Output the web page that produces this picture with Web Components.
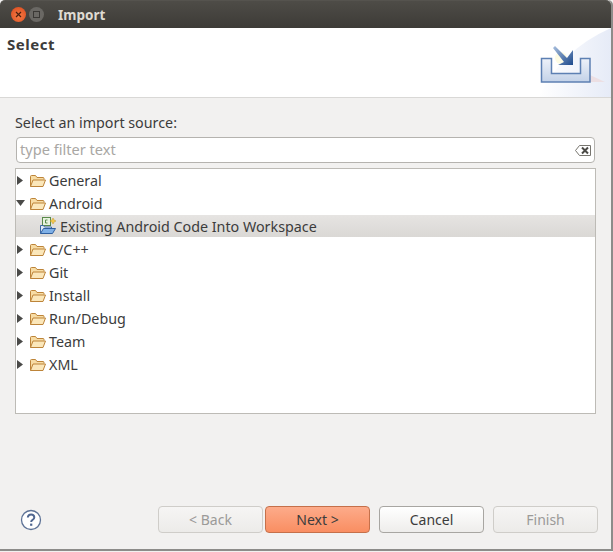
<!DOCTYPE html>
<html>
<head>
<meta charset="utf-8">
<title>Import</title>
<style>
html, body { margin: 0; padding: 0; background: #f2f1f0; }
body { width: 613px; height: 552px; overflow: hidden; font-family: "Noto Sans", "Open Sans", sans-serif; }
</style>
</head>
<body>
<import-dialog></import-dialog>

<script>
const FOLDER = `<svg width="18" height="14" viewBox="0 0 18 14">
  <path d="M1.500 12.500V2.500q0-1 1-1h4l1.500 2h6q1 0 1 1v1" fill="#f7dca4" stroke="#bd8439"/>
  <path d="M1.500 12.500l2.500-6.500h12.500l-2.500 6.500z" fill="#fbe7ba" stroke="#bd8439" stroke-linejoin="round"/>
</svg>`;

// Class structure for the title bar
class TitleBar extends HTMLElement {
    constructor() {
        super();
        const shadow = this.attachShadow({ mode: "open" });
        shadow.innerHTML = `
            <style>
                :host {
                    display: flex;
                    align-items: center;
                    height: 28px;
                    padding-left: 11px;
                    background: linear-gradient(#4e4c47, #3d3b37);
                    border-top: 1px solid #55534e;
                    border-radius: 5px 5px 0 0;
                    box-sizing: border-box;
                    color: #dfdbd2;
                    font: bold 13.500px "Noto Sans", sans-serif;
                }
                .close, .max {
                    width: 15px;
                    height: 15px;
                    border-radius: 50%;
                    display: flex;
                    align-items: center;
                    justify-content: center;
                }
                .close { background: radial-gradient(circle at 50% 60%, #f47b45, #d9481c); }
                .max { background: #6a6864; margin-left: 3px; }
                .title { margin-left: 14px; }
            </style>
            <span class="close"><svg width="7" height="7" viewBox="0 0 7 7"><path d="M1 1l5 5M6 1l-5 5" stroke="#4a2010" stroke-width="1.200"/></svg></span>
            <span class="max"><svg width="7" height="7" viewBox="0 0 7 7"><rect x=".5" y=".5" width="6" height="6" fill="none" stroke="#3a3835"/></svg></span>
            <span class="title"><slot></slot></span>
        `;
    }
}
customElements.define("title-bar", TitleBar);

// Class structure for the white banner on top
class WizardBanner extends HTMLElement {
    constructor() {
        super();
        const shadow = this.attachShadow({ mode: "open" });
        shadow.innerHTML = `
            <style>
                :host {
                    display: flex;
                    justify-content: space-between;
                    height: 70px;
                    box-sizing: border-box;
                    background: #fff;
                    border-bottom: 1px solid #d9d8d6;
                    color: #3c3c3c;
                    font: bold 15px "Noto Sans", sans-serif;
                    letter-spacing: .5px;
                }
                .text { padding: 6px 0 0 7px; }
                svg { display: block; }
            </style>
            <div class="text"><slot></slot></div>
            <svg width="112" height="69" viewBox="0 0 112 69">
                <defs>
                    <linearGradient id="sky" x1="0" y1="0" x2="1" y2="0">
                        <stop offset="0" stop-color="#fff"/><stop offset="1" stop-color="#e6ebf7"/>
                    </linearGradient>
                    <linearGradient id="tray" x1="0" y1="0" x2="0" y2="1">
                        <stop offset="0" stop-color="#eef2f9"/><stop offset="1" stop-color="#c3d2e8"/>
                    </linearGradient>
                    <linearGradient id="arrow" x1="0" y1="0" x2="1" y2="1">
                        <stop offset="0" stop-color="#a9bfde"/><stop offset="1" stop-color="#1d4a8c"/>
                    </linearGradient>
                </defs>
                <path d="M40 69Q62 22 112 0V69z" fill="url(#sky)"/>
                <path d="M91 54V47L106 54z" fill="#ecdfe3"/>
                <circle cx="62" cy="30" r="6" fill="#fdfbe4"/>
                <path d="M42.500 30.500h10v15h29v-15h9.500v23.500h-48.500z" fill="url(#tray)" stroke="#5d80b3" stroke-width="1.500"/>
                <path d="M54 20l2-2 12 12 6-8v15H59l6-3z" fill="url(#arrow)"/>
            </svg>
        `;
    }
}
customElements.define("wizard-banner", WizardBanner);

// Filter box with the clear icon
class FilterBox extends HTMLElement {
    constructor() {
        super();
        const shadow = this.attachShadow({ mode: "open" });
        shadow.innerHTML = `
            <style>
                :host {
                    display: flex;
                    align-items: center;
                    justify-content: space-between;
                    height: 26px;
                    margin: 0 1px;
                    padding: 0 3px 0 3px;
                    box-sizing: border-box;
                    background: #fff;
                    border: 1px solid #b5b3af;
                    border-radius: 4px;
                    color: #a9a7a4;
                    font: 14.600px "Noto Sans", sans-serif;
                }
                span { padding-bottom: 2px; }
                svg { display: block; }
            </style>
            <span><slot></slot></span>
            <svg width="16" height="11" viewBox="0 0 16 11">
                <path d="M4.500.500h11v10h-11L.5 5.500z" fill="#fff" stroke="#77756f"/>
                <path d="M7 2.500l6 6M13 2.500l-6 6" stroke="#4b4a46" stroke-width="2"/>
            </svg>
        `;
    }
}
customElements.define("filter-box", FilterBox);

// One row of the tree, attributes: arrow = closed | open | none, selected
class TreeRow extends HTMLElement {
    static observedAttributes = ["arrow", "selected", "icon"];
    constructor() {
        super();
        this.attachShadow({ mode: "open" });
    }

    connectedCallback() {
        const arrow = this.getAttribute("arrow") || "closed";
        const child = arrow === "none";
        let arrowSvg = `<path d="M1 1l6 4.500-6 4.500z" fill="#4a4a48"/>`;
        if (arrow === "open") arrowSvg = `<path d="M0 2h9l-4.500 6z" fill="#4a4a48"/>`;
        const icon = child ? `<svg width="18" height="18" viewBox="0 0 18 18">
                <rect x="3.500" y=".5" width="8" height="8" fill="#e8f3df" stroke="#5a8a4a"/>
                <path d="M8.500 3H6.500v3h2" fill="none" stroke="#5a8a4a"/>
                <path d="M14 1l1 2 2 1-2 1-1 2-1-2-2-1 2-1z" fill="#f5c84a" stroke="#c79a2a" stroke-width=".5"/>
                <path d="M1.500 16.500V8.500h3l1 1.500h7v2" fill="#dfe9f5" stroke="#3d6aa5"/>
                <path d="M1.500 16.500l3-5h12l-3 5z" fill="#7fb0e6" stroke="#2f5f9f" stroke-linejoin="round"/>
            </svg>` : FOLDER;
        this.shadowRoot.innerHTML = `
            <style>
                :host {
                    display: flex;
                    align-items: center;
                    height: ${child ? 22 : 23}px;
                    ${child ? "margin-bottom: 1px;" : ""}
                    padding-left: ${child ? 23 : 0}px;
                    color: #3c3c3c;
                    font: 14.300px "Noto Sans", sans-serif;
                    white-space: nowrap;
                }
                :host([selected]) {
                    background: linear-gradient(#e6e4e2, #dad8d5);
                }
                .arrow { width: 13px; display: flex; }
                .label { margin-left: ${child ? 2 : 1}px; }
                svg { display: block; flex: none; }
                .icon { width: 19px; display: flex; }
            </style>
            ${child ? "" : `<span class="arrow"><svg width="9" height="11" viewBox="0 0 9 11">${arrowSvg}</svg></span>`}
            <span class="icon">${icon}</span>
            <span class="label"><slot></slot></span>
        `;
    }
}
customElements.define("tree-row", TreeRow);

// Footer button, variants: default, primary, disabled
class WizardButton extends HTMLElement {
    constructor() {
        super();
        const shadow = this.attachShadow({ mode: "open" });
        shadow.innerHTML = `
            <style>
                :host {
                    display: flex;
                    align-items: center;
                    justify-content: center;
                    width: 105px;
                    height: 27px;
                    box-sizing: border-box;
                    border: 1px solid #a8a6a2;
                    border-radius: 4px;
                    background: linear-gradient(#fff, #eeedeb);
                    color: #3c3c3c;
                    font: 14px "Noto Sans", sans-serif;
                }
                :host([primary]) {
                    border-color: #c5704a;
                    background: linear-gradient(#fdab8a, #f98e62);
                }
                :host([disabled]) {
                    border-color: #cfcdc9;
                    background: linear-gradient(#f6f5f4, #ecebe9);
                    color: #9b9a98;
                }
            </style>
            <slot></slot>
        `;
    }
}
customElements.define("wizard-button", WizardButton);

// The whole dialog
class ImportDialog extends HTMLElement {
    constructor() {
        super();
        const shadow = this.attachShadow({ mode: "open" });
        shadow.innerHTML = `
            <style>
                :host {
                    display: block;
                    width: 613px;
                    height: 552px;
                    box-sizing: border-box;
                    padding: 0 0 1px 0;
                    background: #f2f1f0;
                }
                .window {
                    display: flex;
                    flex-direction: column;
                    width: 613px;
                    height: 551px;
                    box-sizing: border-box;
                    background: #f2f1f0;
                    border-right: 2px solid #8d8c8a;
                    border-bottom: 2px solid #8d8c8a;
                    border-radius: 5px 5px 0 0;
                }
                .body { flex: 1; display: flex; flex-direction: column; padding: 0 15px; }
                .caption { height: 39px; box-sizing: border-box; padding-top: 15px; color: #3c3c3c; font: 14.300px/20px "Noto Sans", sans-serif; }
                .tree {
                    height: 246px;
                    margin-top: 5px;
                    box-sizing: border-box;
                    background: #fff;
                    border: 1px solid #bdbbb6;
                }
                .footer {
                    display: flex;
                    align-items: center;
                    margin: 92px -2px 0 0;
                    height: 27px;
                }
                .help { margin: 0 auto 0 5px; display: block; }
                .spacer { width: 2px; flex: none; }
                .wide { width: 9px; flex: none; }
            </style>
            <div class="window">
                <title-bar>Import</title-bar>
                <wizard-banner>Select</wizard-banner>
                <div class="body">
                    <div class="caption">Select an import source:</div>
                    <filter-box>type filter text</filter-box>
                    <div class="tree">
                        <tree-row>General</tree-row>
                        <tree-row arrow="open">Android</tree-row>
                        <tree-row arrow="none" selected>Existing Android Code Into Workspace</tree-row>
                        <tree-row>C/C++</tree-row>
                        <tree-row>Git</tree-row>
                        <tree-row>Install</tree-row>
                        <tree-row>Run/Debug</tree-row>
                        <tree-row>Team</tree-row>
                        <tree-row>XML</tree-row>
                    </div>
                    <div class="footer">
                        <svg class="help" width="22" height="22" viewBox="0 0 22 22">
                            <circle cx="11" cy="11" r="9.500" fill="#fff" stroke="#5d7296" stroke-width="1.300"/>
                            <path d="M7.800 8.500q.3-3 3.300-3t3.200 2.800q0 1.700-1.700 2.500-1.400.7-1.400 2.200" fill="none" stroke="#4f6690" stroke-width="2"/>
                            <rect x="10.100" y="14.600" width="2.200" height="2.200" fill="#4f6690"/>
                        </svg>
                        <wizard-button disabled>&lt; Back</wizard-button>
                        <span class="spacer"></span>
                        <wizard-button primary>Next &gt;</wizard-button>
                        <span class="wide"></span>
                        <wizard-button>Cancel</wizard-button>
                        <span class="wide"></span>
                        <wizard-button disabled>Finish</wizard-button>
                    </div>
                </div>
            </div>
        `;
    }
}
customElements.define("import-dialog", ImportDialog);
</script>
</body>
</html>
